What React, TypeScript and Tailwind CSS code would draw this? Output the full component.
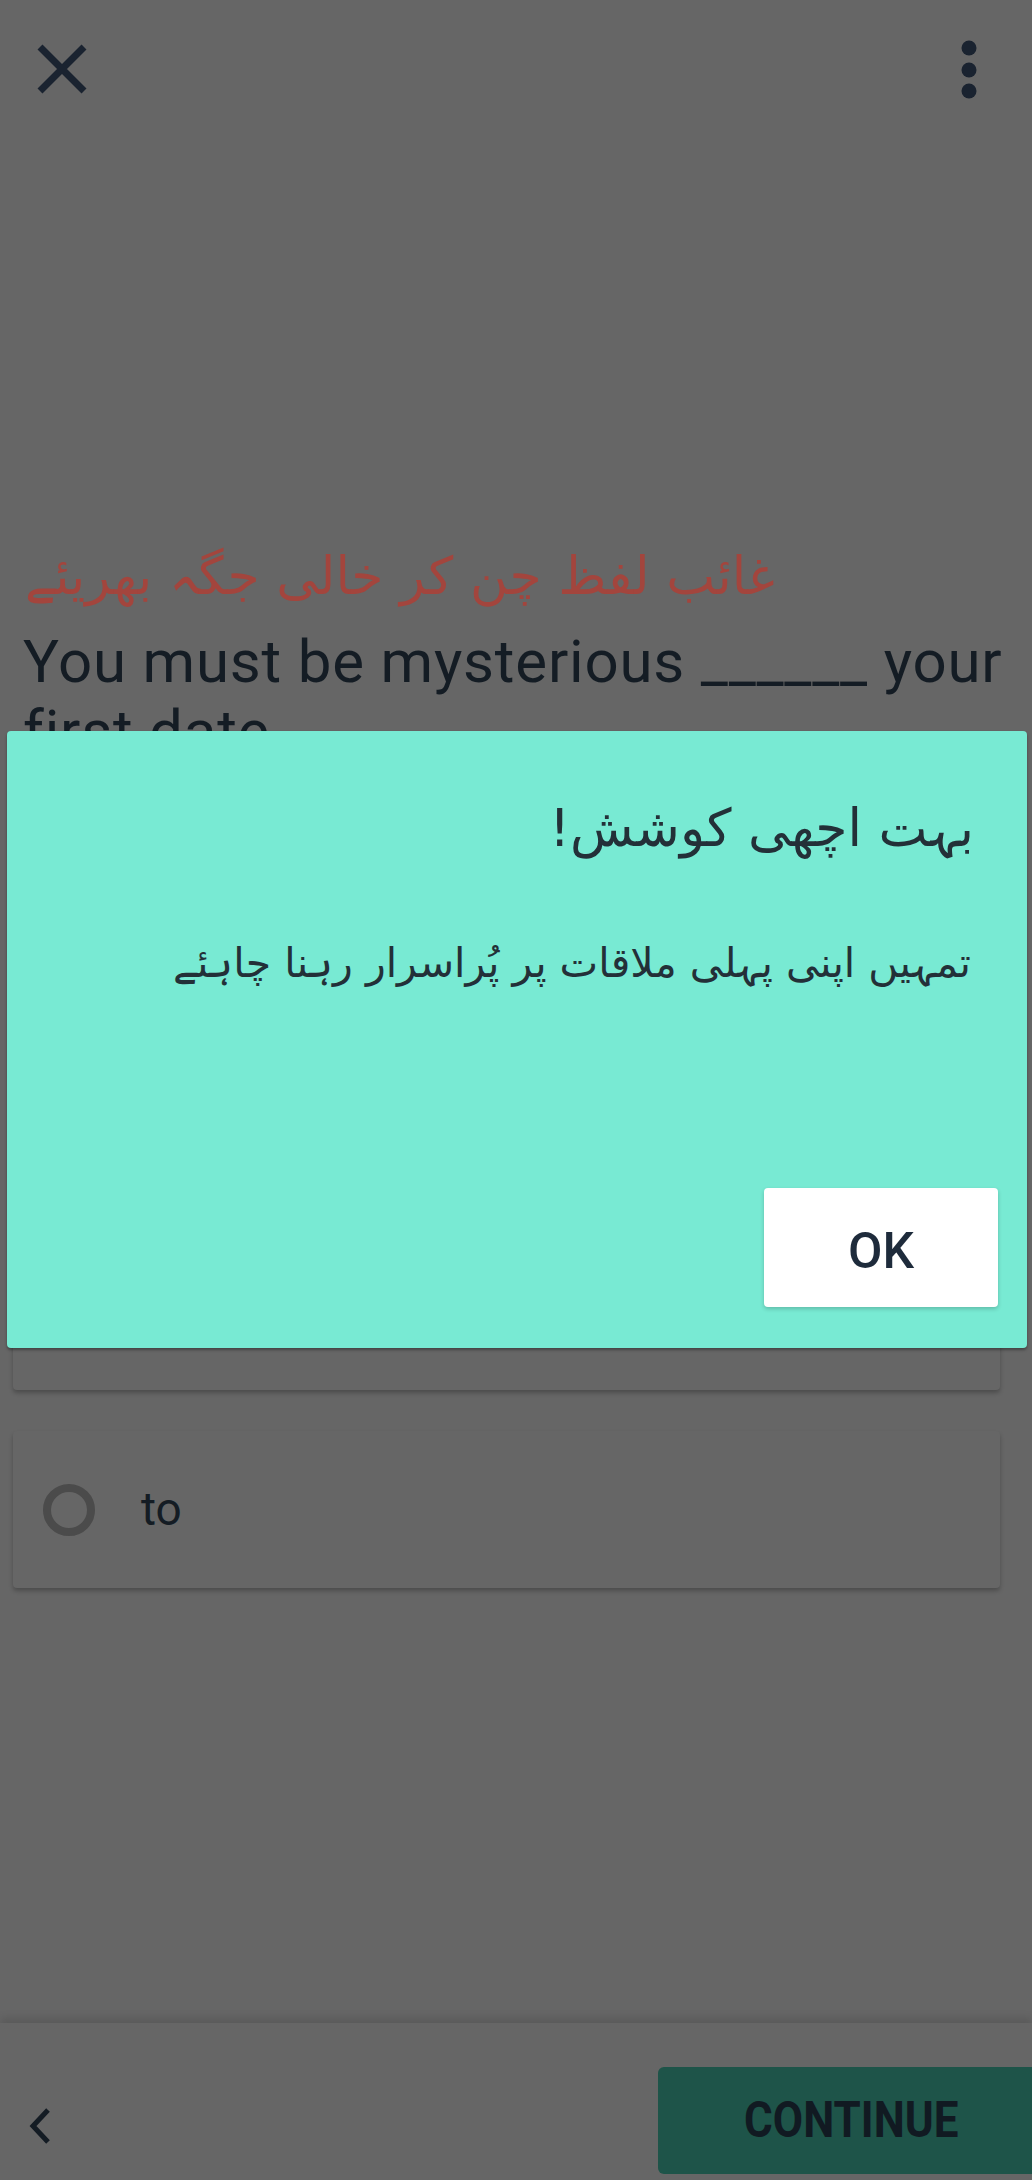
import React from "react";

const options = ["on", "in", "at", "to"];

function CloseIcon() {
  return (
    <svg width="52" height="52" viewBox="0 0 52 52" fill="none">
      <path d="M4 4 L48 48 M48 4 L4 48" stroke="#1a2330" strokeWidth="7" strokeLinecap="butt" />
    </svg>
  );
}

function MoreIcon() {
  return (
    <svg width="18" height="60" viewBox="0 0 18 60">
      <circle cx="9" cy="8" r="7.5" fill="#1a2330" />
      <circle cx="9" cy="30" r="7.5" fill="#1a2330" />
      <circle cx="9" cy="51" r="7.5" fill="#1a2330" />
    </svg>
  );
}

function OptionCard({ label }: { label: string }) {
  return (
    <div className="flex h-[157px] items-center gap-[46px] rounded-[4px] bg-[#666666] pl-[30px] shadow-[0_3px_4px_rgba(0,0,0,0.25)]">
      <span className="block h-[52px] w-[52px] rounded-full border-[8px] border-[#4b4b4b]" />
      <span className="font-['Roboto',sans-serif] text-[46px] text-[#141c24]">{label}</span>
    </div>
  );
}

export default function App() {
  return (
    <div className="relative flex h-[2180px] w-[1032px] flex-col overflow-hidden bg-[#666666] font-['Roboto',sans-serif]">
      {/* Header */}
      <div className="flex h-[140px] items-start justify-between pl-[36px] pr-[54px] pt-[43px]">
        <CloseIcon />
        <div className="-mt-[3px]">
          <MoreIcon />
        </div>
      </div>

      {/* Question */}
      <div className="flex flex-1 flex-col px-[13px]">
        <p className="mt-[401px] pl-[12px] font-['DejaVu_Sans',sans-serif] text-[52px] leading-[70px] text-[#a3453d]">
          غائب لفظ چن کر خالی جگہ بھریئے
        </p>
        <p className="mt-[16px] pl-[10px] text-[60px] leading-[70px] tracking-[0.8px] text-[#141c24]">
          You must be mysterious ______ your first date
        </p>

        <div className="mt-[70px] flex flex-col gap-[41px] pr-[19px]">
          {options.map((o) => (
            <OptionCard key={o} label={o} />
          ))}
        </div>
      </div>

      {/* Bottom bar */}
      <div className="flex h-[157px] items-start justify-between shadow-[0_-5px_8px_rgba(0,0,0,0.12)]">
        <svg className="ml-[28px] mt-[85px]" width="24" height="36" viewBox="0 0 24 36" fill="none">
          <path d="M20 2 L5 18 L20 34" stroke="#141c24" strokeWidth="5" />
        </svg>
        <button className="mt-[44px] flex h-[107px] w-[374px] items-center rounded-l-[6px] bg-[#1e5449] pl-[86px]">
          <span className="origin-left scale-x-[0.88] font-['Roboto',sans-serif] text-[50px] font-bold text-[#111a22]">
            CONTINUE
          </span>
        </button>
      </div>

      {/* Dialog */}
      <div className="absolute left-[7px] top-[731px] flex h-[617px] w-[1020px] flex-col rounded-[4px] bg-[#78ead3] px-[29px] pb-[41px] shadow-[0_2px_3px_rgba(0,0,0,0.35)]" dir="rtl">
        <p className="mt-[58px] pr-[24px] font-['DejaVu_Sans',sans-serif] text-[52px] text-[#233038]">
          بہت اچھی کوشش!
        </p>
        <p className="mt-[66px] pr-[27px] font-['DejaVu_Sans',sans-serif] text-[41px] text-[#233038]">
          تمہیں اپنی پہلی ملاقات پر پُراسرار رہنا چاہئے
        </p>
        <div className="mt-auto flex">
          <button className="flex h-[119px] w-[234px] items-center justify-center rounded-[4px] bg-white shadow-[0_2px_4px_rgba(0,0,0,0.2)]">
            <span className="mt-[8px] font-['Roboto',sans-serif] text-[50px] font-medium text-[#1e2b3b]">OK</span>
          </button>
        </div>
      </div>
    </div>
  );
}
